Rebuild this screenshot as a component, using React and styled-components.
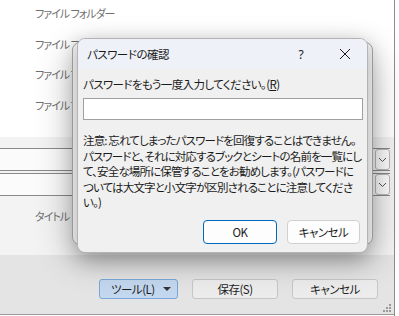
import React from 'react';
import styled, { createGlobalStyle } from 'styled-components';

const GlobalStyle = createGlobalStyle`
  html, body {
    margin: 0;
    padding: 0;
    width: 399px;
    height: 316px;
    overflow: hidden;
    background: #ffffff;
  }
  body {
    font-family: "Noto Sans CJK JP", "Noto Sans", sans-serif;
    font-feature-settings: "palt";
    font-size: 11.5px;
    letter-spacing: -0.5px;
    color: #1b1b1b;
  }
`;

const Desktop = styled.div`
  position: relative;
  width: 399px;
  height: 316px;
  display: flex;
  overflow: hidden;
`;

const SaveWindow = styled.div`
  width: 394px;
  height: 316px;
  display: flex;
  flex-direction: column;
  border-right: 1px solid #8c8c8c;
`;

const FileList = styled.div`
  height: 137px;
  background: #ffffff;
  display: flex;
  flex-direction: column;
`;

const FileRow = styled.div`
  height: 30.5px;
  line-height: 26px;
  padding-left: 35px;
  color: #707070;
  font-size: 11px;
  letter-spacing: -1px;
  white-space: nowrap;
`;

const FormArea = styled.div`
  height: 118px;
  background: #f3f3f3;
  display: flex;
  flex-direction: column;
  padding-top: 11px;
  box-sizing: border-box;
`;

const Combo = styled.div`
  width: 392px;
  height: 23px;
  margin-left: -2px;
  margin-bottom: 2px;
  display: flex;
  box-sizing: border-box;
  border-top: 1px solid #8a8a8a;
  border-bottom: 1px solid #8a8a8a;
  background: #fbfbfb;
  justify-content: flex-end;
`;

const ComboButton = styled.div`
  width: 15px;
  height: 21px;
  box-sizing: border-box;
  border: 1px solid #b9b9b9;
  border-radius: 3px;
  background: #fdfdfd;
  display: flex;
  align-items: center;
  justify-content: center;
`;

const FieldLabel = styled.div`
  margin-top: 10px;
  padding-left: 35px;
  color: #707070;
  font-size: 11px;
  letter-spacing: -1px;
`;

const Footer = styled.div`
  flex: 1;
  background: #e4e4e4;
  display: flex;
  justify-content: flex-end;
  align-items: flex-start;
  gap: 14px;
  padding: 24px 16px 0 0;
  border-bottom: 1px solid #9a9a9a;
  margin-bottom: 1px;
  position: relative;
`;

const FootButton = styled.div`
  width: ${p => p.w}px;
  height: 20px;
  box-sizing: border-box;
  border: 1px solid ${p => (p.active ? '#7aa7d9' : '#c6c6c6')};
  background: ${p => (p.active ? '#c3d7ee' : '#ececec')};
  border-radius: 3px;
  display: flex;
  align-items: center;
  justify-content: ${p => (p.split ? 'space-between' : 'center')};
  padding: ${p => (p.split ? '0 6px 0 11px' : '0')};
  color: #1e1e1e;
  white-space: nowrap;
`;

const Caret = styled.span`
  width: 0;
  height: 0;
  border-left: 4px solid transparent;
  border-right: 4px solid transparent;
  border-top: 4px solid #333;
`;

const Grip = styled.div`
  position: absolute;
  right: 3px;
  bottom: 2px;
  display: grid;
  grid-template-columns: repeat(3, 2px);
  gap: 1px;
`;

const GripDot = styled.span`
  width: 2px;
  height: 2px;
  background: ${p => (p.on ? '#9a9a9a' : 'transparent')};
`;

const BackDialog = styled.div`
  position: absolute;
  left: 72px;
  top: 42px;
  width: 301px;
  height: 203px;
  box-sizing: border-box;
  border: 1px solid #a6a6a6;
  border-radius: 8px;
  background: #f0f0f0;
  box-shadow: 0 12px 36px rgba(0, 0, 0, 0.3);
`;

const Dialog = styled.div`
  position: absolute;
  left: 77px;
  top: 38px;
  width: 291px;
  height: 215px;
  box-sizing: border-box;
  border: 1px solid #b4b4b4;
  border-radius: 8px;
  background: #f0f0f0;
  overflow: hidden;
  display: flex;
  flex-direction: column;
  box-shadow: 0 6px 20px rgba(0, 0, 0, 0.25);
`;

const TitleBar = styled.div`
  height: 30px;
  background: #eef1f8;
  display: flex;
  align-items: center;
  padding-left: 9px;
  flex-shrink: 0;
`;

const Title = styled.div`
  flex: 1;
  color: #1b1b1b;
`;

const TitleButton = styled.div`
  width: 44px;
  height: 30px;
  display: flex;
  align-items: center;
  justify-content: center;
  font-family: "Noto Sans", sans-serif;
  font-size: 12px;
  letter-spacing: 0;
`;

const Body = styled.div`
  flex: 1;
  padding: 7px 5px 0 5px;
  display: flex;
  flex-direction: column;
`;

const Prompt = styled.div`
  line-height: 16px;
  letter-spacing: -0.6px;
  white-space: nowrap;
`;

const Under = styled.span`
  text-decoration: underline;
`;

const PasswordInput = styled.div`
  margin-top: 6px;
  width: 280px;
  height: 22px;
  box-sizing: border-box;
  background: #ffffff;
  border: 1px solid #a0a0a0;
`;

const Note = styled.div`
  margin-top: 13px;
  line-height: 15.5px;
  letter-spacing: -0.85px;
`;

const NoteLine = styled.div`
  white-space: nowrap;
`;

const ButtonRow = styled.div`
  margin-top: auto;
  margin-bottom: 8px;
  display: flex;
  justify-content: flex-end;
  gap: 10px;
  padding-right: 2px;
`;

const DialogButton = styled.div`
  width: ${p => p.w}px;
  height: 24px;
  box-sizing: border-box;
  border-radius: 4px;
  border: ${p => (p.primary ? '1.5px solid #0067c0' : '1px solid #d0d0d0')};
  background: #fdfdfd;
  display: flex;
  align-items: center;
  justify-content: center;
  color: #1b1b1b;
`;

const grip = [0, 0, 1, 0, 1, 1, 1, 1, 1];

export default function App() {
  return (
    <Desktop>
      <GlobalStyle />
      <SaveWindow>
        <FileList>
          {[0, 1, 2, 3].map(i => (
            <FileRow key={i}>ファイル フォルダー</FileRow>
          ))}
        </FileList>
        <FormArea>
          {[0, 1].map(i => (
            <Combo key={i}>
              <ComboButton>
                <svg width="9" height="6" viewBox="0 0 9 6">
                  <path d="M1 1 L4.5 4.5 L8 1" fill="none" stroke="#555" strokeWidth="1" />
                </svg>
              </ComboButton>
            </Combo>
          ))}
          <FieldLabel>タイトル</FieldLabel>
        </FormArea>
        <Footer>
          <FootButton w={79} active split>
            ツール(L)<Caret />
          </FootButton>
          <FootButton w={86}>保存(S)</FootButton>
          <FootButton w={86}>キャンセル</FootButton>
          <Grip>
            {grip.map((g, i) => <GripDot key={i} on={g} />)}
          </Grip>
        </Footer>
      </SaveWindow>

      <BackDialog />

      <Dialog>
        <TitleBar>
          <Title>パスワードの確認</Title>
          <TitleButton>?</TitleButton>
          <TitleButton>
            <svg width="12" height="12" viewBox="0 0 12 12">
              <path d="M1 1 L11 11 M11 1 L1 11" stroke="#1b1b1b" strokeWidth="1" />
            </svg>
          </TitleButton>
        </TitleBar>
        <Body>
          <Prompt>
            パスワードをもう一度入力してください。(<Under>R</Under>)
          </Prompt>
          <PasswordInput />
          <Note>
            <NoteLine>注意: 忘れてしまったパスワードを回復することはできません。</NoteLine>
            <NoteLine>パスワードと、それに対応するブックとシートの名前を一覧にし</NoteLine>
            <NoteLine>て、安全な場所に保管することをお勧めします。(パスワードに</NoteLine>
            <NoteLine>ついては大文字と小文字が区別されることに注意してくださ</NoteLine>
            <NoteLine>い。)</NoteLine>
          </Note>
          <ButtonRow>
            <DialogButton w={74} primary>OK</DialogButton>
            <DialogButton w={73}>キャンセル</DialogButton>
          </ButtonRow>
        </Body>
      </Dialog>
    </Desktop>
  );
}
